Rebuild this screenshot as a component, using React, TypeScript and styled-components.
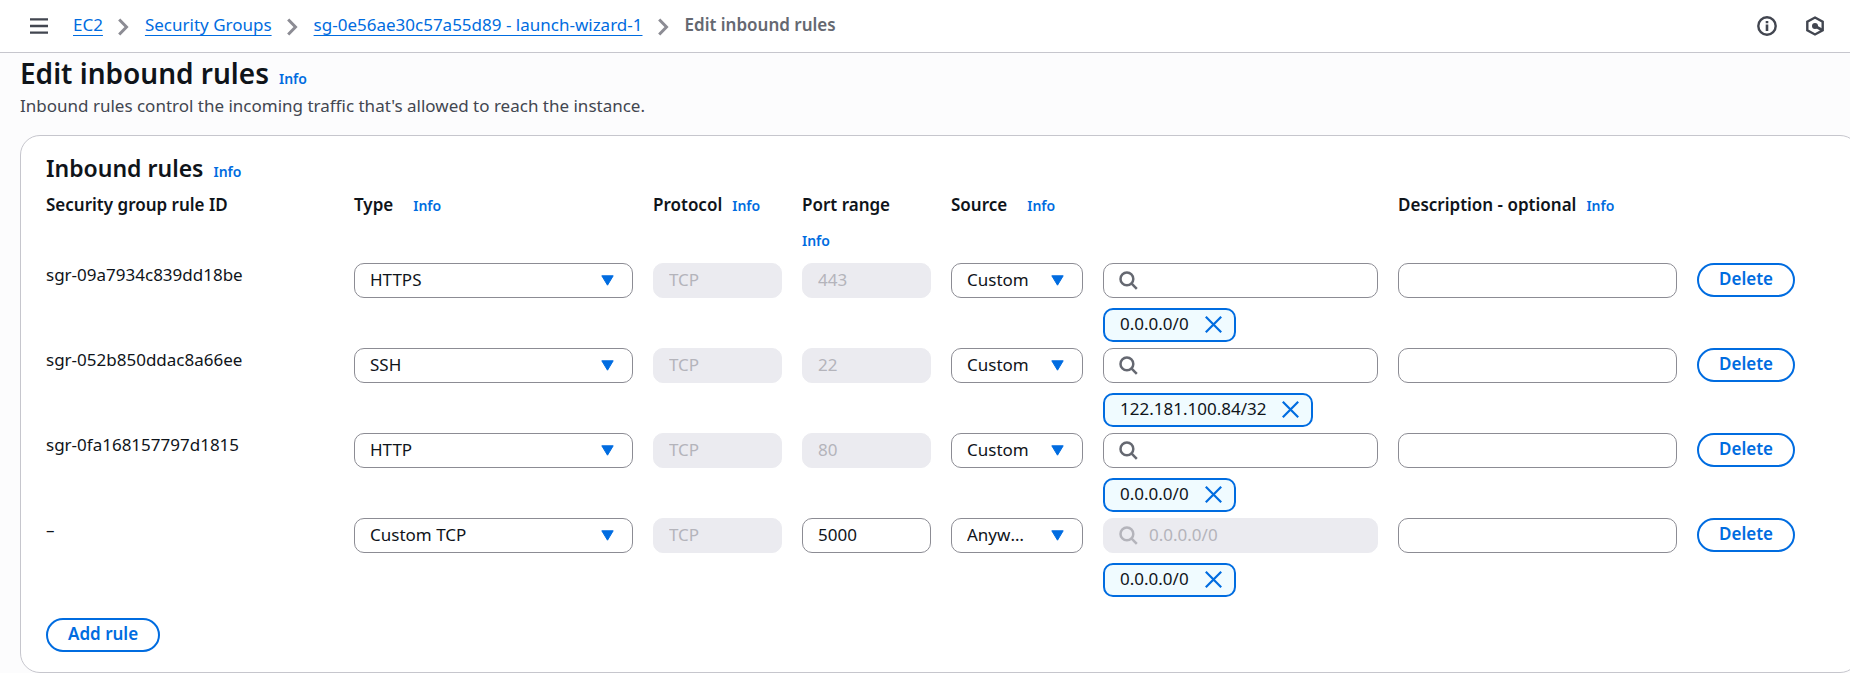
import React from 'react';
import styled, { createGlobalStyle, css } from 'styled-components';

const color = {
  text: '#0f141a',
  secondary: '#424650',
  muted: '#656871',
  link: '#006ce0',
  border: '#8c8c94',
  divider: '#c6c6cd',
  disabledBg: '#ebebf0',
  disabledText: '#b4b4bb',
  tokenBg: '#f0fbff',
};

const GlobalStyle = createGlobalStyle`
  * { box-sizing: border-box; }
  body {
    margin: 0;
    background: #fcfcfd;
    color: ${color.text};
    font-family: "Noto Sans", "Open Sans", sans-serif;
    font-size: 17px;
    line-height: 24px;
  }
  button, input, select { font: inherit; color: inherit; }
  svg { display: block; flex: none; }
`;

const Page = styled.div`
  overflow-x: hidden;
`;

const TopBar = styled.header`
  display: flex;
  align-items: center;
  height: 53px;
  padding: 0 25px 0 30px;
  background: #fff;
  border-bottom: 1px solid ${color.divider};
`;

const IconButton = styled.button`
  display: flex;
  padding: 0;
  border: 0;
  background: none;
  color: ${color.secondary};
  cursor: pointer;
`;

const Crumbs = styled.ol`
  display: flex;
  flex: 1;
  list-style: none;
  margin: 0;
  padding: 0 0 2px 25px;
`;

const Crumb = styled.li`
  display: flex;
  align-items: center;
  color: ${color.muted};

  &:last-child {
    font-weight: 600;
  }
  a {
    color: ${color.link};
    text-decoration: underline 1px;
    text-underline-offset: 4px;
    text-decoration-skip-ink: none;
  }
  svg {
    margin: 3px 16px 0 15px;
    color: ${color.border};
  }
`;

const Tools = styled.div`
  display: flex;
  gap: 28px;
`;

const Main = styled.main`
  margin-right: -10px;
  padding: 3px 0 0 20px;
`;

const TitleRow = styled.div<{ $wide?: boolean }>`
  display: flex;
  flex-wrap: wrap;
  align-items: baseline;
  gap: 14px ${(p) => (p.$wide ? 20 : 10)}px;
`;

const PageTitle = styled.h1`
  margin: 0;
  font-size: 28px;
  line-height: 34px;
  font-weight: 600;
`;

const CardTitle = styled.h2`
  margin: 0;
  font-size: 23px;
  line-height: 30px;
  font-weight: 600;
`;

const InfoLink = styled.a`
  color: ${color.link};
  font-size: 14px;
  line-height: 20px;
  font-weight: 600;
  text-decoration: none;
`;

const Description = styled.p`
  margin: 4px 0 17px;
  color: ${color.secondary};
`;

const Card = styled.section`
  padding: 17px 25px 20px;
  background: #fff;
  border: 1px solid ${color.divider};
  border-radius: 20px;
`;

const RulesTable = styled.table`
  display: block;
  margin-top: 10px;
  thead, tbody { display: block; }
`;

const columns = css`
  display: grid;
  grid-template-columns:
    minmax(0, 288fr) minmax(0, 279fr) minmax(0, 129fr) minmax(0, 129fr)
    minmax(0, 132fr) minmax(0, 275fr) minmax(0, 279fr) minmax(0, 137fr);
  column-gap: 20px;
`;

const HeadRow = styled.tr`
  ${columns}
  padding-bottom: 12px;
`;

const HeadCell = styled.th<{ $span?: number }>`
  grid-column: span ${(p) => p.$span ?? 1};
  padding: 0;
  text-align: left;
  font-weight: 600;
`;

const RuleRow = styled.tr`
  ${columns}
  height: 85px;
`;

const Cell = styled.td`
  padding: 0;
`;

const field = css`
  display: block;
  width: 100%;
  height: 35px;
  padding: 0 15px 2px;
  background: #fff;
  border: 1px solid ${color.border};
  border-radius: 10px;
  outline-color: ${color.link};

  &:disabled {
    background: ${color.disabledBg};
    border-color: ${color.disabledBg};
    color: ${color.disabledText};
    opacity: 1;
  }
`;

const TextInput = styled.input`
  ${field}
`;

const SearchInput = styled.input`
  ${field}
  padding-left: 45px;
`;

const Select = styled.select`
  ${field}
  appearance: none;
  padding-right: 50px;
  text-overflow: ellipsis;
  cursor: pointer;
`;

const FieldWrap = styled.div`
  position: relative;
`;

const Caret = styled.svg`
  position: absolute;
  top: 12px;
  right: 19px;
  fill: ${color.link};
  stroke: ${color.link};
  pointer-events: none;
`;

const SearchGlyph = styled.svg<{ $disabled?: boolean }>`
  position: absolute;
  top: 8px;
  left: 16px;
  fill: none;
  stroke: ${(p) => (p.$disabled ? color.disabledText : color.muted)};
  pointer-events: none;
`;

const Token = styled.span`
  display: inline-flex;
  align-items: center;
  gap: 16px;
  height: 34px;
  margin-top: 10px;
  padding: 0 12px 2px 15px;
  background: ${color.tokenBg};
  border: 2px solid ${color.link};
  border-radius: 10px;
`;

const RemoveButton = styled(IconButton)`
  color: ${color.link};
`;

const Button = styled.button`
  height: 34px;
  padding: 0 20px 2px;
  background: #fff;
  border: 2px solid ${color.link};
  border-radius: 17px;
  color: ${color.link};
  font-weight: 600;
  white-space: nowrap;
  cursor: pointer;
`;

const Actions = styled.div`
  display: flex;
  margin-top: 15px;
`;

const Info = () => <InfoLink href="#info">Info</InfoLink>;

const Chevron = () => (
  <svg width="11" height="18" viewBox="0 0 11 18" fill="none" stroke="currentColor" strokeWidth="3" aria-hidden="true">
    <path d="M1.2 1.5 8.5 9l-7.3 7.5" />
  </svg>
);

interface DropdownProps {
  label: string;
  value: string;
  options: string[];
}

const Dropdown = ({ label, value, options }: DropdownProps) => (
  <FieldWrap>
    <Select aria-label={label} defaultValue={value}>
      {options.map((o) => (
        <option key={o}>{o}</option>
      ))}
    </Select>
    <Caret width="13" height="11" viewBox="0 0 13 11" strokeWidth="1" strokeLinejoin="round" aria-hidden="true">
      <path d="M.8.8h11.4L6.5 10.2Z" />
    </Caret>
  </FieldWrap>
);

const rules = [
  { id: 'sgr-09a7934c839dd18be', type: 'HTTPS', port: '443', source: 'Custom', cidr: '0.0.0.0/0' },
  { id: 'sgr-052b850ddac8a66ee', type: 'SSH', port: '22', source: 'Custom', cidr: '122.181.100.84/32' },
  { id: 'sgr-0fa168157797d1815', type: 'HTTP', port: '80', source: 'Custom', cidr: '0.0.0.0/0' },
  { id: '–', type: 'Custom TCP', port: '5000', source: 'Anywhere-IPv4', cidr: '0.0.0.0/0' },
];

const types = ['HTTPS', 'SSH', 'HTTP', 'Custom TCP'];
const sources = ['Custom', 'Anywhere-IPv4'];

const crumbs = ['EC2', 'Security Groups', 'sg-0e56ae30c57a55d89 - launch-wizard-1'];

export default function App() {
  return (
    <Page>
      <GlobalStyle />
      <TopBar>
        <IconButton aria-label="Open navigation">
          <svg width="18" height="16" viewBox="0 0 18 16" fill="none" stroke="currentColor" strokeWidth="2.4">
            <path d="M0 1.4h18M0 8h18M0 14.6h18" />
          </svg>
        </IconButton>
        <Crumbs aria-label="Breadcrumbs">
          {crumbs.map((c) => (
            <Crumb key={c}>
              <a href="#crumb">{c}</a>
              <Chevron />
            </Crumb>
          ))}
          <Crumb aria-current="page">Edit inbound rules</Crumb>
        </Crumbs>
        <Tools>
          <IconButton aria-label="Help">
            <svg width="20" height="20" viewBox="0 0 20 20" fill="none" stroke="currentColor" strokeWidth="2.4">
              <circle cx="10" cy="10" r="8.7" />
              <path d="M10 8.6V15M10 5v2.2" strokeWidth="2.6" />
            </svg>
          </IconButton>
          <IconButton aria-label="Diagnostics">
            <svg width="20" height="20" viewBox="0 0 20 20" fill="none" stroke="currentColor" strokeWidth="2.4">
              <path d="M10 1.5 17.7 5.6v8.8L10 18.5l-7.7-4.1V5.6Z" />
              <path d="m10 10 7 4" strokeWidth="2.6" />
              <circle cx="10" cy="10" r="3" fill="currentColor" stroke="none" />
            </svg>
          </IconButton>
        </Tools>
      </TopBar>

      <Main>
        <TitleRow>
          <PageTitle>Edit inbound rules</PageTitle>
          <Info />
        </TitleRow>
        <Description>Inbound rules control the incoming traffic that's allowed to reach the instance.</Description>

        <Card>
          <TitleRow>
            <CardTitle>Inbound rules</CardTitle>
            <Info />
          </TitleRow>

          <RulesTable>
            <thead>
              <HeadRow>
                <HeadCell>Security group rule ID</HeadCell>
                <HeadCell>
                  <TitleRow $wide>Type <Info /></TitleRow>
                </HeadCell>
                <HeadCell>
                  <TitleRow>Protocol <Info /></TitleRow>
                </HeadCell>
                <HeadCell>
                  <TitleRow $wide>Port range <Info /></TitleRow>
                </HeadCell>
                <HeadCell $span={2}>
                  <TitleRow $wide>Source <Info /></TitleRow>
                </HeadCell>
                <HeadCell $span={2}>
                  <TitleRow>Description - optional <Info /></TitleRow>
                </HeadCell>
              </HeadRow>
            </thead>
            <tbody>
              {rules.map((r) => {
                const customPort = r.type === 'Custom TCP';
                const anywhere = r.source !== 'Custom';
                return (
                  <RuleRow key={r.id}>
                    <Cell>{r.id}</Cell>
                    <Cell>
                      <Dropdown label="Type" value={r.type} options={types} />
                    </Cell>
                    <Cell>
                      <TextInput aria-label="Protocol" defaultValue="TCP" disabled />
                    </Cell>
                    <Cell>
                      <TextInput aria-label="Port range" defaultValue={r.port} disabled={!customPort} />
                    </Cell>
                    <Cell>
                      <Dropdown label="Source type" value={r.source} options={sources} />
                    </Cell>
                    <Cell>
                      <FieldWrap>
                        <SearchInput aria-label="Source" defaultValue={anywhere ? r.cidr : ''} disabled={anywhere} />
                        <SearchGlyph $disabled={anywhere} width="19" height="19" viewBox="0 0 19 19" strokeWidth="2.5" aria-hidden="true">
                          <circle cx="7.9" cy="7.9" r="6.4" />
                          <path d="m12.4 12.4 5.4 5.4" />
                        </SearchGlyph>
                      </FieldWrap>
                      <Token>
                        {r.cidr}
                        <RemoveButton aria-label={`Remove ${r.cidr}`}>
                          <svg width="17" height="17" viewBox="0 0 17 17" fill="none" stroke="currentColor" strokeWidth="2.2">
                            <path d="m.8.8 15.4 15.4M16.2.8.8 16.2" />
                          </svg>
                        </RemoveButton>
                      </Token>
                    </Cell>
                    <Cell>
                      <TextInput aria-label="Description" />
                    </Cell>
                    <Cell>
                      <Button>Delete</Button>
                    </Cell>
                  </RuleRow>
                );
              })}
            </tbody>
          </RulesTable>

          <Actions>
            <Button>Add rule</Button>
          </Actions>
        </Card>
      </Main>
    </Page>
  );
}
